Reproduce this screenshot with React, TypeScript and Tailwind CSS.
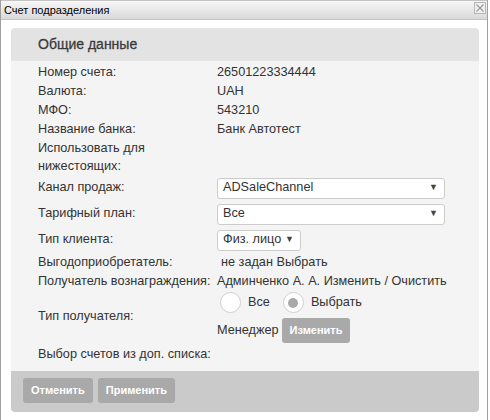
import React from "react";

const Row = ({ label, children, h = "h-[19px]" }: { label: React.ReactNode; children?: React.ReactNode; h?: string }) => (
  <div className={`flex items-center ${h}`}>
    <div className="w-[179px] shrink-0 whitespace-nowrap">{label}</div>
    <div className="flex items-center whitespace-nowrap">{children}</div>
  </div>
);

const Select = ({ value, w }: { value: string; w: string }) => (
  <div className={`${w} h-[21px] bg-white border border-[#cccccc] rounded-[3px] flex items-center justify-between pl-[5px] pr-[6px]`}>
    <span>{value}</span>
    <span className="text-[9px] text-[#444]">▼</span>
  </div>
);

const Btn = ({ children }: { children: React.ReactNode }) => (
  <div className="h-[25px] px-[8px] rounded-[3px] bg-[#a9a9a9] text-white font-bold text-[11px] flex items-center">{children}</div>
);

export default function App() {
  return (
    <div className="w-[490px] h-[420px] bg-white" style={{ fontFamily: '"Liberation Sans", Arial, sans-serif' }}>
      <div className="w-[488px] h-[420px] border-l border-r border-[#a0a0a0] relative">
        <div className="h-[20px] border-t border-b border-[#c4c4c4] bg-gradient-to-b from-[#f7f7f7] to-[#d9d9d9] flex items-center pl-[3px] text-[11px] text-black">
          Счет подразделения
        </div>
        <div className="absolute right-[1px] top-[2px] w-[12px] h-[12px] border border-[#b5b5b5] bg-[#f0f0f0] flex items-center justify-center">
          <svg width="8" height="8" viewBox="0 0 8 8">
            <path d="M0.5 0.5 L7.5 7.5 M7.5 0.5 L0.5 7.5" stroke="#9a9a9a" strokeWidth="1.2" />
          </svg>
        </div>
        <div className="ml-[10px] mt-[8px] w-[468px] rounded-[4px] overflow-hidden text-[12.7px] text-[#333333]">
          <div className="h-[33px] bg-[#e3e3e3] flex items-center pl-[27px] text-[14px] text-[#3a3a3a] [-webkit-text-stroke:0.3px_#3a3a3a]">Общие данные</div>
          <div className="bg-[#f4f4f4] pl-[27px] pt-[2px] pb-[6px]">
            <Row label="Номер счета:">26501223334444</Row>
            <Row label="Валюта:">UAH</Row>
            <Row label="МФО:">543210</Row>
            <Row label="Название банка:">Банк Автотест</Row>
            <div className="leading-[18px] w-[179px]">Использовать для<br />нижестоящих:</div>
            <Row label="Канал продаж:" h="h-[26px]"><Select value="ADSaleChannel" w="w-[228px]" /></Row>
            <Row label="Тарифный план:" h="h-[26px]"><Select value="Все" w="w-[228px]" /></Row>
            <Row label="Тип клиента:" h="h-[26px]"><Select value="Физ. лицо" w="w-[84px]" /></Row>
            <Row label="Выгодоприобретатель:">
              <span className="ml-[4px]">не задан Выбрать</span>
            </Row>
            <Row label="Получатель вознаграждения:">Админченко А. А. Изменить / Очистить</Row>
            <div className="flex items-center">
              <div className="w-[179px] shrink-0">Тип получателя:</div>
              <div className="flex flex-col pt-[1px]">
                <div className="flex items-center h-[21px] ml-[3px]">
                  <span className="w-[21px] h-[21px] rounded-full bg-white border border-[#cfcfcf]" />
                  <span className="ml-[7px]">Все</span>
                  <span className="ml-[13px] w-[21px] h-[21px] rounded-full bg-white border border-[#cfcfcf] flex items-center justify-center">
                    <span className="w-[10px] h-[10px] rounded-full bg-[#a9a9a9]" />
                  </span>
                  <span className="ml-[7px]">Выбрать</span>
                </div>
                <div className="flex items-center mt-[5px]">
                  <span>Менеджер</span>
                  <span className="ml-[3px]"><Btn>Изменить</Btn></span>
                </div>
              </div>
            </div>
            <div className="h-[20px] flex items-center mt-[2px]">Выбор счетов из доп. списка:</div>
          </div>
          <div className="bg-[#cacaca] h-[41px] pl-[12px] pt-[7px] flex gap-[5px] items-start">
            <Btn>Отменить</Btn>
            <Btn>Применить</Btn>
          </div>
        </div>
      </div>
    </div>
  );
}
